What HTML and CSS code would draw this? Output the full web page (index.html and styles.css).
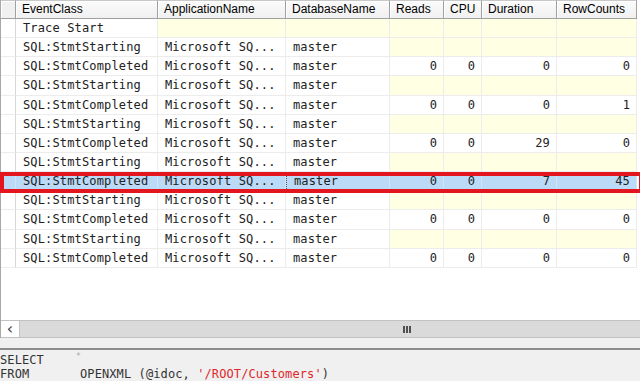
FILE: index.html
```html
<!DOCTYPE html>
<html lang="en">
<head>
    <meta charset="UTF-8">
    <title>Trace</title>
    <link rel="stylesheet" href="styles.css">
</head>
<body>
    <div class="trace">
        <div class="grid">
            <div class="row head">
                <div class="cell gut"></div>
                <div class="cell">EventClass</div>
                <div class="cell">ApplicationName</div>
                <div class="cell">DatabaseName</div>
                <div class="cell">Reads</div>
                <div class="cell">CPU</div>
                <div class="cell">Duration</div>
                <div class="cell">RowCounts</div>
            </div>
            <div class="row">
                <div class="cell gut"></div>
                <div class="cell">Trace Start</div>
                <div class="cell empty"></div>
                <div class="cell empty"></div>
                <div class="cell empty"></div>
                <div class="cell empty"></div>
                <div class="cell empty"></div>
                <div class="cell empty"></div>
            </div>
            <div class="row">
                <div class="cell gut"></div>
                <div class="cell">SQL:StmtStarting</div>
                <div class="cell">Microsoft SQ...</div>
                <div class="cell">master</div>
                <div class="cell empty"></div>
                <div class="cell empty"></div>
                <div class="cell empty"></div>
                <div class="cell empty"></div>
            </div>
            <div class="row">
                <div class="cell gut"></div>
                <div class="cell">SQL:StmtCompleted</div>
                <div class="cell">Microsoft SQ...</div>
                <div class="cell">master</div>
                <div class="cell num">0</div>
                <div class="cell num">0</div>
                <div class="cell num">0</div>
                <div class="cell num">0</div>
            </div>
            <div class="row">
                <div class="cell gut"></div>
                <div class="cell">SQL:StmtStarting</div>
                <div class="cell">Microsoft SQ...</div>
                <div class="cell">master</div>
                <div class="cell empty"></div>
                <div class="cell empty"></div>
                <div class="cell empty"></div>
                <div class="cell empty"></div>
            </div>
            <div class="row">
                <div class="cell gut"></div>
                <div class="cell">SQL:StmtCompleted</div>
                <div class="cell">Microsoft SQ...</div>
                <div class="cell">master</div>
                <div class="cell num">0</div>
                <div class="cell num">0</div>
                <div class="cell num">0</div>
                <div class="cell num">1</div>
            </div>
            <div class="row">
                <div class="cell gut"></div>
                <div class="cell">SQL:StmtStarting</div>
                <div class="cell">Microsoft SQ...</div>
                <div class="cell">master</div>
                <div class="cell empty"></div>
                <div class="cell empty"></div>
                <div class="cell empty"></div>
                <div class="cell empty"></div>
            </div>
            <div class="row">
                <div class="cell gut"></div>
                <div class="cell">SQL:StmtCompleted</div>
                <div class="cell">Microsoft SQ...</div>
                <div class="cell">master</div>
                <div class="cell num">0</div>
                <div class="cell num">0</div>
                <div class="cell num">29</div>
                <div class="cell num">0</div>
            </div>
            <div class="row">
                <div class="cell gut"></div>
                <div class="cell">SQL:StmtStarting</div>
                <div class="cell">Microsoft SQ...</div>
                <div class="cell">master</div>
                <div class="cell empty"></div>
                <div class="cell empty"></div>
                <div class="cell empty"></div>
                <div class="cell empty"></div>
            </div>
            <div class="row selected">
                <div class="cell gut"></div>
                <div class="cell">SQL:StmtCompleted</div>
                <div class="cell">Microsoft SQ...</div>
                <div class="cell focus">master</div>
                <div class="cell num">0</div>
                <div class="cell num">0</div>
                <div class="cell num">7</div>
                <div class="cell num">45</div>
            </div>
            <div class="row">
                <div class="cell gut"></div>
                <div class="cell">SQL:StmtStarting</div>
                <div class="cell">Microsoft SQ...</div>
                <div class="cell">master</div>
                <div class="cell empty"></div>
                <div class="cell empty"></div>
                <div class="cell empty"></div>
                <div class="cell empty"></div>
            </div>
            <div class="row">
                <div class="cell gut"></div>
                <div class="cell">SQL:StmtCompleted</div>
                <div class="cell">Microsoft SQ...</div>
                <div class="cell">master</div>
                <div class="cell num">0</div>
                <div class="cell num">0</div>
                <div class="cell num">0</div>
                <div class="cell num">0</div>
            </div>
            <div class="row">
                <div class="cell gut"></div>
                <div class="cell">SQL:StmtStarting</div>
                <div class="cell">Microsoft SQ...</div>
                <div class="cell">master</div>
                <div class="cell empty"></div>
                <div class="cell empty"></div>
                <div class="cell empty"></div>
                <div class="cell empty"></div>
            </div>
            <div class="row">
                <div class="cell gut"></div>
                <div class="cell">SQL:StmtCompleted</div>
                <div class="cell">Microsoft SQ...</div>
                <div class="cell">master</div>
                <div class="cell num">0</div>
                <div class="cell num">0</div>
                <div class="cell num">0</div>
                <div class="cell num">0</div>
            </div>
        </div>
        <div class="hscroll">
            <div class="arrow">&lsaquo;</div>
            <div class="thumb"><span class="grip"></span></div>
        </div>
    </div>
    <div class="query">
        <div class="line"><span class="kw">SELECT</span><span class="star">*</span></div>
        <div class="line"><span class="kw">FROM</span><span>OPENXML (@idoc, <span class="str">'/ROOT/Customers'</span>)</span></div>
    </div>
</body>
</html>
```

FILE: styles.css
```css
body {
    margin: 0;
    width: 640px;
    height: 381px;
    overflow: hidden;
    background: #f0f0f0;
    font-family: "DejaVu Sans Mono", monospace;
    color: #222;
}
.trace {
    height: 338px;
    background: #fff;
    border-left: 1px solid #a8a8a8;
    display: flex;
    flex-direction: column;
    justify-content: space-between;
}
.grid {
    display: flex;
    flex-direction: column;
}
.row {
    display: grid;
    grid-template-columns: 15px 142px 128px 104px 54px 38px 75px 80px;
    height: 19.15px;
    font-size: 12px;
    letter-spacing: 0.15px;
    line-height: 19px;
}
.cell {
    border-right: 1px solid #ececec;
    border-bottom: 1px solid #ececec;
    padding: 0 6px 0 7px;
    white-space: nowrap;
    overflow: hidden;
}
.cell.gut {
    padding: 0;
    border-right-color: #d8d8d8;
}
.cell.empty {
    background: #ffffe3;
}
.cell.num {
    text-align: right;
}
.row.head {
    height: 19px;
}
.head .cell {
    font-family: "Liberation Sans", sans-serif;
    font-size: 12px;
    letter-spacing: 0;
    color: #000;
    background: linear-gradient(#fbfbfb, #f0f0f0);
    border-right: 1px solid #a0a0a0;
    border-bottom: 1px solid #a0a0a0;
    border-top: 1px solid #c8c8c8;
    box-shadow: inset 1px 1px 0 #fff;
    line-height: 16px;
    padding-left: 6px;
}
.head .cell.gut {
    background: #f0f0f0;
}
.selected {
    position: relative;
}
.selected::after {
    content: "";
    position: absolute;
    top: 0;
    bottom: -2px;
    left: -1px;
    right: -3px;
    border: 4px solid #e3161f;
    z-index: 2;
}
.selected .cell {
    background: #bbdaf8;
    border-color: #cfe4f8;
}
.selected .cell.focus {
    border-left: 1px dotted #555;
}
.hscroll {
    display: flex;
    height: 16px;
    border-top: 1px solid #c2c2c2;
    border-bottom: 1px solid #c2c2c2;
    background: #dadada;
}
.arrow {
    width: 18px;
    background: #fff;
    border-right: 1px solid #c2c2c2;
    font-family: "DejaVu Sans", sans-serif;
    font-size: 16px;
    line-height: 15px;
    text-align: center;
    color: #444;
}
.thumb {
    flex: 1;
    display: flex;
    align-items: center;
    padding-left: 383px;
}
.grip {
    width: 8px;
    height: 7px;
    background: repeating-linear-gradient(90deg, #505050 0 2px, transparent 2px 3px);
}
.query {
    margin-top: 10px;
    border-top: 2px solid #8c8c8c;
    padding-top: 3px;
    font-size: 12px;
    line-height: 14px;
    letter-spacing: 0.1px;
    color: #333;
}
.line {
    display: flex;
}
.kw {
    width: 80px;
}
.star {
    font-size: 8px;
    line-height: 8px;
    color: #aaa;
    margin-left: -4px;
}
.str {
    color: #e0262b;
}
```
